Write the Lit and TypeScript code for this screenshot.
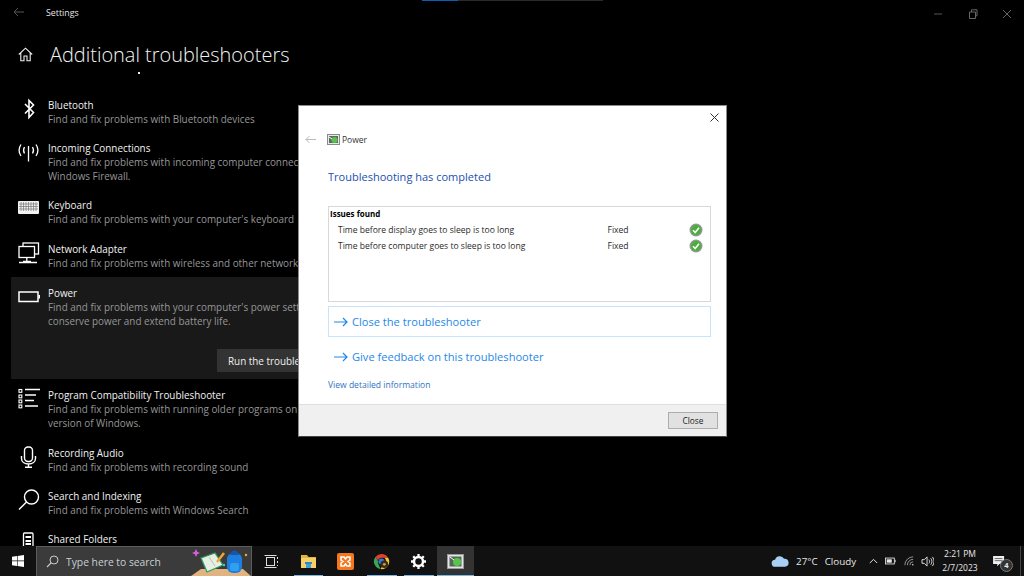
import { LitElement, html, css, svg } from "lit";
import { customElement } from "lit/decorators.js";

const icons: Record<string, unknown> = {
  bluetooth: svg`<path d="M7 6 15.500 14.500 11 19.500V2.500l4.500 4.500L7 15.500" fill="none" stroke="#fff" stroke-width="1.600"/>`,
  incoming: svg`<g fill="none" stroke="#fff" stroke-width="1.300"><path d="M10.500 5v15.500"/><path d="M3 3.500C.6 7 .6 11.500 3 15"/><path d="M18 3.500c2.400 3.500 2.400 8 0 11.500"/><path d="M6.500 6c-1.200 2-1.200 4.500 0 6.500"/><path d="M14.500 6c1.200 2 1.200 4.500 0 6.500"/></g>`,
  keyboard: svg`<rect x="0" y="3" width="21" height="13" rx="1" fill="#f2f2f2"/><g stroke="#777" stroke-width=".7"><path d="M1 6h19M1 8.500h19M1 11h19"/><path d="M3 4v9M5.500 4v9M8 4v9M10.500 4v9M13 4v9M15.500 4v9M18 4v9"/></g>`,
  network: svg`<g fill="none" stroke="#fff" stroke-width="1.300"><rect x="5" y="1" width="15.500" height="11"/><rect x="1" y="4.500" width="15.500" height="11" fill="#000"/><path d="M8.800 15.500v3.500M1 20.500h18M5 19.500h8"/></g>`,
  power: svg`<rect x="1" y="6" width="19" height="9.500" fill="none" stroke="#fff" stroke-width="1.500"/><rect x="20.500" y="9" width="1.500" height="3.500" fill="#fff"/>`,
  program: svg`<g fill="none" stroke="#fff" stroke-width="1.100"><rect x="1" y="1.500" width="2.800" height="2.800"/><rect x="1" y="7" width="2.800" height="2.800"/><rect x="1" y="12" width="2.800" height="2.800"/><rect x="1" y="17" width="2.800" height="2.800"/></g><g stroke="#fff" stroke-width="1.400"><path d="M7 1.500h15M7 7h11M7 12.500h9M7 18h13"/></g>`,
  mic: svg`<g fill="none" stroke="#fff" stroke-width="1.400"><rect x="6.500" y="1" width="8" height="14.500" rx="3.500"/><path d="M3.500 10v2.500c0 3.500 3 5.500 7 5.500s7-2 7-5.500V10M10.500 18v3M7 21.300h7"/></g>`,
  search: svg`<g fill="none" stroke="#fff" stroke-width="1.400"><circle cx="13.500" cy="8" r="7"/><path d="M8.500 13 1 20.500"/></g>`,
  shared: svg`<g fill="none" stroke="#fff" stroke-width="1.300"><rect x="5.500" y="1" width="9.500" height="20" rx="1"/></g><rect x="7.500" y="4" width="5.500" height="2" fill="#fff"/><rect x="7.500" y="8" width="5.500" height="2" fill="#fff"/><rect x="7.500" y="11" width="5.500" height="2" fill="#fff"/>`,
};

const rows = [
  { i: "bluetooth", t: "Bluetooth", d: ["Find and fix problems with Bluetooth devices"] },
  { i: "incoming", t: "Incoming Connections", d: ["Find and fix problems with incoming computer connections through", "Windows Firewall."] },
  { i: "keyboard", t: "Keyboard", d: ["Find and fix problems with your computer's keyboard"] },
  { i: "network", t: "Network Adapter", d: ["Find and fix problems with wireless and other network"] },
  { i: "power", t: "Power", d: ["Find and fix problems with your computer's power settings to", "conserve power and extend battery life."], sel: true },
  { i: "program", t: "Program Compatibility Troubleshooter", d: ["Find and fix problems with running older programs on this", "version of Windows."] },
  { i: "mic", t: "Recording Audio", d: ["Find and fix problems with recording sound"] },
  { i: "search", t: "Search and Indexing", d: ["Find and fix problems with Windows Search"] },
  { i: "shared", t: "Shared Folders", d: [] as string[] },
];

const issues = ["Time before display goes to sleep is too long", "Time before computer goes to sleep is too long"];

const troubleIcon = svg`<rect x=".5" y=".5" width="12" height="10" fill="#e8e8e8" stroke="#8a8a8a"/><rect x="2" y="2" width="9" height="7" fill="#5a6a60"/><circle cx="7.500" cy="6" r="3" fill="#5ac34a"/><path d="M2 3l3 2" stroke="#fff"/>`;

@customElement("app-root")
export class AppRoot extends LitElement {
  static styles = css`
    :host {
      display: block;
      position: relative;
      width: 1024px;
      height: 576px;
      overflow: hidden;
      background: #000;
      font-family: "Open Sans", "Noto Sans", sans-serif;
      color: #fff;
    }
    .page { display: flex; flex-direction: column; height: 576px; }
    .settings { flex: 1; min-height: 0; overflow: hidden; display: flex; flex-direction: column; position: relative; }
    .progress { display: flex; margin-left: 422px; width: 181px; height: 1px; background: #2a2a2a; flex: none; }
    .progress i { width: 36px; background: #0a5fb4; }
    .titlebar { display: flex; align-items: center; height: 24px; flex: none; padding-left: 13px; font-size: 8.800px; color: #e6e6e6; }
    .titlebar .back { width: 11px; height: 10px; margin: -2px 22px 0 0; }
    .controls { margin: 2px 0 0 auto; display: flex; gap: 24.500px; padding-right: 12px; }
    .controls svg { width: 10px; height: 10px; display: block; }
    .heading { display: flex; align-items: center; height: 36px; margin-top: 11px; padding-left: 18px; flex: none; }
    .heading svg { width: 15px; height: 15px; margin-right: 17px; }
    h1 { margin: 0; font-size: 19.950px; font-weight: 300; color: #f4f4f4; white-space: nowrap; }
    .dot { position: absolute; left: 138px; top: 72px; width: 2px; height: 2px; background: #eee; }
    .list { margin: 18.500px 0 0 11px; width: 560px; }
    .row { padding: 7px 0 8px 7px; display: grid; grid-template-columns: 22px 1fr; column-gap: 8px; white-space: nowrap; }
    .row svg { width: 22px; height: 22px; display: block; overflow: visible; }
    .row.sel { background: #191919; margin-top: -1px; padding-top: 9px; padding-bottom: 7px; height: 86px; margin-bottom: 2px; box-sizing: content-box; align-content: start; }
    .row-title { font-size: 9.900px; line-height: 14.500px; margin-bottom: -0.500px; color: #f2f2f2; }
    .row-desc { font-size: 9.900px; line-height: 14.300px; color: #969696; }
    .action { grid-column: 2; margin: 19px 0 0 169px; }
    .run { display: inline-flex; align-items: center; height: 23px; width: 150px; background: #333; padding-left: 11px; font-size: 9.900px; color: #f0f0f0; box-sizing: border-box; }

    .dialog {
      position: absolute; left: 298px; top: 105px; width: 429px; height: 332px;
      box-sizing: border-box; background: #fff; border: 1px solid #8c8c8c; border-bottom-color: #444;
      display: flex; flex-direction: column; color: #000;
    }
    .dlg-close { align-self: flex-end; width: 9px; height: 9px; margin: 7px 7px 0 0; display: block; }
    .dlg-head { display: flex; align-items: center; height: 16px; margin-top: 9px; padding-left: 6px; font-size: 8.500px; color: #333; }
    .dlg-head .b { width: 11px; height: 9px; margin-right: 11px; }
    .dlg-head .t { width: 13px; height: 11px; margin-right: 2px; }
    .dlg-body { flex: 1; padding: 22px 15px 0 29px; display: flex; flex-direction: column; }
    .dlg-title { font-size: 11.030px; line-height: 16px; color: #1a50b0; }
    .box { margin-top: 21px; height: 96px; box-sizing: border-box; border: 1px solid #d8d8d8; padding: 1px 7px 0 1px; }
    .box b { display: block; font-size: 8px; line-height: 11px; font-weight: 700; }
    .issue { display: grid; grid-template-columns: 269.500px 1fr 14px; align-items: center; height: 16px; padding-left: 8px; font-size: 8.550px; color: #2a2a2a; }
    .issue:first-of-type { margin-top: 3px; }
    .issue svg { width: 14px; height: 14px; display: block; }
    .link { display: flex; align-items: center; height: 31px; box-sizing: border-box; padding-left: 5px; gap: 4px; font-size: 11.100px; color: #1e88e8; }
    .link svg { width: 14px; height: 10px; }
    .link.boxed { margin-top: 4px; border: 1px solid #c8e4fa; }
    .link.plain { margin-top: 4px; border: 1px solid transparent; }
    .detail { margin-top: 7px; font-size: 8.550px; line-height: 12px; color: #2f72c4; }
    .dlg-foot { height: 31px; background: #f0f0f0; border-top: 1px solid #dfdfdf; display: flex; justify-content: flex-end; align-items: center; padding-right: 8px; }
    .dlg-btn { width: 50px; height: 17px; box-sizing: border-box; background: #e1e1e1; border: 1px solid #adadad; font-size: 8.300px; color: #222; display: flex; align-items: center; justify-content: center; }

    .taskbar { height: 30px; flex: none; background: #111; display: flex; align-items: stretch; position: relative; }
    .start { width: 36px; display: flex; align-items: center; justify-content: center; }
    .start svg { width: 12px; height: 12px; }
    .searchbox { width: 216px; box-sizing: border-box; background: #3b3b3b; border: 1px solid #5c5c5c; border-bottom: none; display: flex; align-items: center; padding-left: 9px; gap: 7px; font-size: 10.300px; color: #c8d0d4; position: relative; }
    .searchbox .mag { width: 13px; height: 13px; }
    .searchbox .art { position: absolute; right: 0; bottom: 0; width: 60px; height: 28px; }
    .apps { display: flex; }
    .app { width: 36.750px; display: flex; align-items: center; justify-content: center; box-sizing: border-box; position: relative; }
    .app.tv { width: 38px; }
    .app svg { width: 17px; height: 17px; display: block; }
    .app.open::after { content: ""; position: absolute; left: 3.500px; right: 3.500px; bottom: 0; height: 1.500px; background: #76b9ed; }
    .app.active { background: #333; }
    .app.active::after { content: ""; position: absolute; left: 0; right: 0; bottom: 0; height: 1.500px; background: #76b9ed; }
    .tray { margin-left: auto; display: flex; align-items: center; color: #e8e8e8; }
    .tray svg { display: block; }
    .weather { display: flex; align-items: center; gap: 7px; margin-right: 13px; white-space: nowrap; font-size: 9.800px; }
    .sys { display: flex; align-items: center; gap: 7.300px; margin-right: 2px; }
    .clock { width: 48px; text-align: center; font-size: 8.500px; line-height: 14px; }
    .notif { position: relative; width: 20px; margin: 0 11px 0 9px; }
    .badge { position: absolute; right: 0; bottom: -5px; width: 13px; height: 13px; border-radius: 50%; background: #333; border: 1px solid #777; box-sizing: border-box; font-size: 7.500px; line-height: 11px; text-align: center; font-weight: 700; }
    .desk { position: absolute; right: 3px; top: 0; bottom: 0; width: 1px; background: #444; }
  `;

  render() {
    return html`
      <div class="page">
        <div class="settings">
          <div class="progress"><i></i></div>
          <div class="titlebar">
            <svg class="back" viewBox="0 0 11 10"><path d="M11 5H1M5 1 1 5l4 4" fill="none" stroke="#555" stroke-width="1"/></svg>
            <span>Settings</span>
            <div class="controls">
              <svg viewBox="0 0 10 10"><path d="M1 5h8" stroke="#555"/></svg>
              <svg viewBox="0 0 10 10"><path d="M1.500 3h6v6.500h-6zM3.500 3V.8h5.500v6H7.500" fill="none" stroke="#666"/></svg>
              <svg viewBox="0 0 10 10"><path d="M1 1l8 8M9 1 1 9" stroke="#666"/></svg>
            </div>
          </div>
          <div class="heading">
            <svg viewBox="0 0 15 15"><path d="M.8 7.500 7.500 1.200l6.700 6.300M2.800 6v7.800h3.200V9h3v4.800h3.200V6" fill="none" stroke="#eee" stroke-width="1.100"/></svg>
            <h1>Additional troubleshooters</h1>
          </div>
          <div class="dot"></div>
          <div class="list">
            ${rows.map((r) => html`
              <div class="row ${r.sel ? "sel" : ""}">
                <svg viewBox="0 0 22 22">${icons[r.i]}</svg>
                <div>
                  <div class="row-title">${r.t}</div>
                  ${r.d.map((l) => html`<div class="row-desc">${l}</div>`)}
                </div>
                ${r.sel ? html`<div class="action"><div class="run">Run the troubleshooter</div></div>` : ""}
              </div>
            `)}
          </div>
        </div>
        <div class="taskbar">
          <div class="start"><svg viewBox="0 0 12 12"><path d="M0 1.700 5 1v4.600H0zM5.600.9 12 0v5.600H5.600zM0 6.300h5V11l-5-.7zM5.600 6.300H12V12l-6.400-.9z" fill="#fff"/></svg></div>
          <div class="searchbox">
            <svg class="mag" viewBox="0 0 13 13"><circle cx="8" cy="5" r="4" fill="none" stroke="#ccc" stroke-width="1"/><path d="M5 8 1 12" stroke="#ccc" stroke-width="1.100"/></svg>
            <span>Type here to search</span>
            <svg class="art" viewBox="0 0 60 28">
              <path d="M0 28 10 21h42l8 7z" fill="#e0b380"/>
              <path d="M5 1l1.200 2.800L9 5 6.200 6.200 5 9 3.800 6.200 1 5l2.800-1.200z" fill="#d45fe0"/>
              <path d="M10 10l14-5 8 12-16 7z" fill="#e6efe0" stroke="#2e9a6a" stroke-width="1.300"/>
              <path d="M18 9l6 9" stroke="#9ab" stroke-width=".7"/>
              <path d="M26 14l7-9" stroke="#f2a33a" stroke-width="2.500"/>
              <circle cx="33" cy="17" r="1.200" fill="#4cc"/>
              <rect x="36" y="5" width="15" height="20" rx="6" fill="#1e7fe0"/>
              <path d="M39 7c1-6 8-6 9 0" fill="#1456b0"/>
              <rect x="39" y="15" width="9" height="8" rx="2" fill="#2fa0f0"/>
              <circle cx="55" cy="7" r="1.200" fill="#f5b030"/>
            </svg>
          </div>
          <div class="apps">
            <div class="app tv"><svg viewBox="0 0 17 17"><g fill="none" stroke="#ddd"><rect x="3.500" y="4.500" width="8" height="8"/><path d="M1.500 2.500h12M1.500 14.500h12M14.500 4v2M14.500 8v2M14.500 12v1"/></g></svg></div>
            <div class="app open"><svg viewBox="0 0 17 17"><path d="M1 2h6l1.500 2H16v4H1z" fill="#e6b13c"/><rect x="1" y="5" width="15" height="10" fill="#f6d266"/><rect x="6" y="10" width="5" height="5" fill="#3fa0e0"/><rect x="5" y="9" width="7" height="2" fill="#2f86c8"/></svg></div>
            <div class="app"><svg viewBox="0 0 17 17"><rect width="17" height="17" rx="2" fill="#f5781e"/><path d="M4 4h3l1.500 2L10 4h3v3l-2 1.500L13 10v3h-3l-1.500-2L7 13H4v-3l2-1.500L4 7z" fill="none" stroke="#fff" stroke-width="1.500"/></svg></div>
            <div class="app open"><svg viewBox="0 0 18 18"><path d="M9 1a8 8 0 0 1 7 4H9a4 4 0 0 0-3.800 2.800L2.800 4A8 8 0 0 1 9 1z" fill="#e2402f"/><path d="M2.800 4 6 10l-1 0 3 7A8 8 0 0 1 2.800 4z" fill="#3aa757"/><path d="M16 5a8 8 0 0 1-8 12l3-5a4 4 0 0 0 1-7z" fill="#f7c52c"/><circle cx="9" cy="9" r="3.200" fill="#2f78e0"/><circle cx="12" cy="12" r="4" fill="#3a2c18"/><circle cx="12" cy="12" r="1.500" fill="#c9a24a"/></svg></div>
            <div class="app open"><svg viewBox="0 0 17 17"><circle cx="8.500" cy="8.500" r="4.500" fill="none" stroke="#fff" stroke-width="2.500"/><path d="M8.500 1v3M8.500 13v3M1 8.500h3M13 8.500h3M3.200 3.200l2 2M11.800 11.800l2 2M13.800 3.200l-2 2M5.200 11.800l-2 2" stroke="#fff" stroke-width="2.300"/></svg></div>
            <div class="app active"><svg viewBox="0 0 17 17"><rect x=".5" y="1.500" width="16" height="14" fill="#e4e4e4" stroke="#999"/><rect x="2.500" y="3.500" width="12" height="10" fill="#55665c"/><circle cx="10" cy="9" r="4" fill="#5ac34a"/><path d="M3 4l4 3" stroke="#fff"/></svg></div>
          </div>
          <div class="tray">
            <div class="weather">
              <svg width="18" height="12" viewBox="0 0 20 13"><path d="M5 13a4 4 0 0 1-.5-8A5.500 5.500 0 0 1 14.500 4 4.500 4.500 0 0 1 15.500 13z" fill="#a8d0f4"/></svg>
              <span>27°C</span><span>Cloudy</span>
            </div>
            <div class="sys">
              <svg width="9" height="6" viewBox="0 0 11 7"><path d="M1 6l4.500-4.500L10 6" fill="none" stroke="#e8e8e8" stroke-width="1.200"/></svg>
              <svg width="11" height="8" viewBox="0 0 13 9"><rect x=".5" y="1" width="10.500" height="7" fill="none" stroke="#e8e8e8"/><rect x="2" y="2.500" width="6" height="4" fill="#e8e8e8"/><rect x="11.500" y="3" width="1" height="3" fill="#e8e8e8"/></svg>
              <svg width="10" height="10" viewBox="0 0 12 12"><g fill="none" stroke="#aaa"><path d="M1 11A10 10 0 0 1 11 1"/><path d="M4 11a7 7 0 0 1 7-7"/><path d="M7 11a4 4 0 0 1 4-4"/></g><circle cx="10.500" cy="10.500" r="1" fill="#ccc"/></svg>
              <svg width="13" height="11" viewBox="0 0 14 12"><g fill="none" stroke="#e8e8e8"><path d="M1 4h2.500L6.500 1v10L3.500 8H1z"/><path d="M8.500 4c1 1 1 3 0 4M10.500 2.500c1.800 2 1.800 5 0 7M12.300 1c2.400 3 2.400 7 0 10"/></g></svg>
            </div>
            <div class="clock">2:21 PM<br />2/7/2023</div>
            <div class="notif">
              <svg width="12" height="11" viewBox="0 0 14 13"><path d="M0 0h13v9.500H7.500L5 12V9.500H0z" fill="#eee"/><path d="M2 3h9M2 5.500h9" stroke="#555"/></svg>
              <div class="badge">4</div>
            </div>
          </div>
          <div class="desk"></div>
        </div>
      </div>

      <div class="dialog">
        <svg class="dlg-close" viewBox="0 0 9 9"><path d="M.5.5l8 8M8.500.5l-8 8" stroke="#333" stroke-width="1"/></svg>
        <div class="dlg-head">
          <svg class="b" viewBox="0 0 11 9"><path d="M11 4.500H1M4.500 1 1 4.500 4.500 8" fill="none" stroke="#bbb" stroke-width="1"/></svg>
          <svg class="t" viewBox="0 0 13 11">${troubleIcon}</svg>
          <span>Power</span>
        </div>
        <div class="dlg-body">
          <div class="dlg-title">Troubleshooting has completed</div>
          <div class="box">
            <b>Issues found</b>
            ${issues.map((t) => html`
              <div class="issue">
                <span>${t}</span><span>Fixed</span>
                <svg viewBox="0 0 14 14"><circle cx="7" cy="7" r="6.500" fill="#8f9a8f"/><circle cx="7" cy="7" r="5" fill="#49ae3c"/><path d="M4 7.200 6.200 9.500 10 4.800" fill="none" stroke="#fff" stroke-width="1.600"/></svg>
              </div>`)}
          </div>
          <div class="link boxed">
            <svg viewBox="0 0 14 10"><path d="M0 5h13M9 1l4 4-4 4" fill="none" stroke="#1e88e8" stroke-width="1.200"/></svg>
            <span>Close the troubleshooter</span>
          </div>
          <div class="link plain">
            <svg viewBox="0 0 14 10"><path d="M0 5h13M9 1l4 4-4 4" fill="none" stroke="#1e88e8" stroke-width="1.200"/></svg>
            <span>Give feedback on this troubleshooter</span>
          </div>
          <div class="detail">View detailed information</div>
        </div>
        <div class="dlg-foot"><div class="dlg-btn">Close</div></div>
      </div>
    `;
  }
}
